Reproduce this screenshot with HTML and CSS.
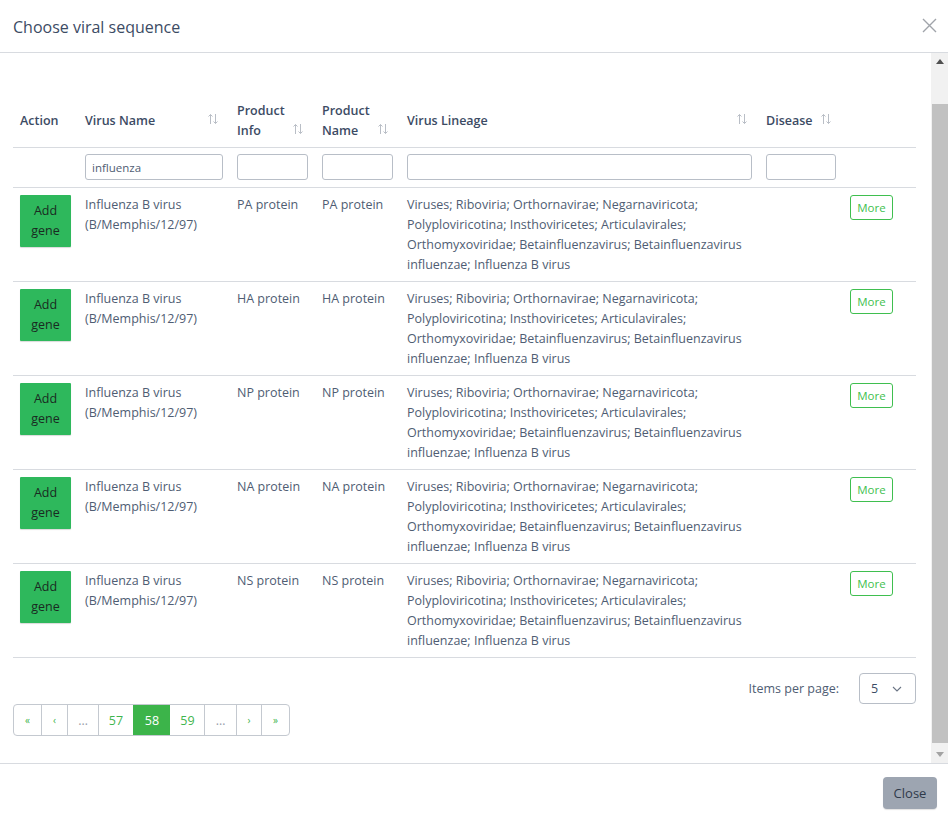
FILE: index.html
```html
<!DOCTYPE html>
<html>
<head>
<meta charset="utf-8">
<link rel="stylesheet" href="styles.css">
</head>
<body>
<div class="modal">
  <div class="modal-header">
    <h5 class="modal-title">Choose viral sequence</h5>
    <button class="btn-x" aria-label="Close"><svg width="15" height="15" viewBox="0 0 15 15"><path d="M1 1L14 14M14 1L1 14" stroke="#a0a4aa" stroke-width="1.4" fill="none"/></svg></button>
  </div>
  <div class="modal-body-wrap">
    <div class="modal-body">
      <table class="vtable">
        <colgroup>
          <col class="c-action"><col class="c-name"><col class="c-info"><col class="c-pname"><col class="c-lin"><col class="c-dis"><col class="c-more">
        </colgroup>
        <thead>
          <tr class="head-row">
            <th><div class="th-in"><span>Action</span></div></th>
            <th><div class="th-in"><span>Virus Name</span><svg class="sort" viewBox="0 0 12 12"><path d="M3.5 11V1.5M1.5 3.5L3.5 1.5L5.5 3.5M8.5 1V10.5M6.5 8.5L8.5 10.5L10.5 8.5" stroke="#b9bec6" stroke-width="1" fill="none"/></svg></div></th>
            <th><div class="th-in"><span>Product<br>Info</span><svg class="sort" viewBox="0 0 12 12"><path d="M3.5 11V1.5M1.5 3.5L3.5 1.5L5.5 3.5M8.5 1V10.5M6.5 8.5L8.5 10.5L10.5 8.5" stroke="#b9bec6" stroke-width="1" fill="none"/></svg></div></th>
            <th><div class="th-in"><span>Product<br>Name</span><svg class="sort" viewBox="0 0 12 12"><path d="M3.5 11V1.5M1.5 3.5L3.5 1.5L5.5 3.5M8.5 1V10.5M6.5 8.5L8.5 10.5L10.5 8.5" stroke="#b9bec6" stroke-width="1" fill="none"/></svg></div></th>
            <th><div class="th-in"><span>Virus Lineage</span><svg class="sort" viewBox="0 0 12 12"><path d="M3.5 11V1.5M1.5 3.5L3.5 1.5L5.5 3.5M8.5 1V10.5M6.5 8.5L8.5 10.5L10.5 8.5" stroke="#b9bec6" stroke-width="1" fill="none"/></svg></div></th>
            <th><div class="th-in"><span>Disease</span><svg class="sort" viewBox="0 0 12 12"><path d="M3.5 11V1.5M1.5 3.5L3.5 1.5L5.5 3.5M8.5 1V10.5M6.5 8.5L8.5 10.5L10.5 8.5" stroke="#b9bec6" stroke-width="1" fill="none"/></svg></div></th>
            <th></th>
          </tr>
          <tr class="filter-row">
            <td></td>
            <td><input class="finput" value="influenza"></td>
            <td><input class="finput"></td>
            <td><input class="finput"></td>
            <td><input class="finput"></td>
            <td><input class="finput"></td>
            <td></td>
          </tr>
        </thead>
        <tbody>
          <tr>
            <td><button class="btn-add">Add<br>gene</button></td>
            <td>Influenza B virus<br>(B/Memphis/12/97)</td>
            <td>PA protein</td>
            <td>PA protein</td>
            <td>Viruses; Riboviria; Orthornavirae; Negarnaviricota; Polyploviricotina; Insthoviricetes; Articulavirales; Orthomyxoviridae; Betainfluenzavirus; Betainfluenzavirus influenzae; Influenza B virus</td>
            <td></td>
            <td><button class="btn-more">More</button></td>
          </tr>
          <tr>
            <td><button class="btn-add">Add<br>gene</button></td>
            <td>Influenza B virus<br>(B/Memphis/12/97)</td>
            <td>HA protein</td>
            <td>HA protein</td>
            <td>Viruses; Riboviria; Orthornavirae; Negarnaviricota; Polyploviricotina; Insthoviricetes; Articulavirales; Orthomyxoviridae; Betainfluenzavirus; Betainfluenzavirus influenzae; Influenza B virus</td>
            <td></td>
            <td><button class="btn-more">More</button></td>
          </tr>
          <tr>
            <td><button class="btn-add">Add<br>gene</button></td>
            <td>Influenza B virus<br>(B/Memphis/12/97)</td>
            <td>NP protein</td>
            <td>NP protein</td>
            <td>Viruses; Riboviria; Orthornavirae; Negarnaviricota; Polyploviricotina; Insthoviricetes; Articulavirales; Orthomyxoviridae; Betainfluenzavirus; Betainfluenzavirus influenzae; Influenza B virus</td>
            <td></td>
            <td><button class="btn-more">More</button></td>
          </tr>
          <tr>
            <td><button class="btn-add">Add<br>gene</button></td>
            <td>Influenza B virus<br>(B/Memphis/12/97)</td>
            <td>NA protein</td>
            <td>NA protein</td>
            <td>Viruses; Riboviria; Orthornavirae; Negarnaviricota; Polyploviricotina; Insthoviricetes; Articulavirales; Orthomyxoviridae; Betainfluenzavirus; Betainfluenzavirus influenzae; Influenza B virus</td>
            <td></td>
            <td><button class="btn-more">More</button></td>
          </tr>
          <tr>
            <td><button class="btn-add">Add<br>gene</button></td>
            <td>Influenza B virus<br>(B/Memphis/12/97)</td>
            <td>NS protein</td>
            <td>NS protein</td>
            <td>Viruses; Riboviria; Orthornavirae; Negarnaviricota; Polyploviricotina; Insthoviricetes; Articulavirales; Orthomyxoviridae; Betainfluenzavirus; Betainfluenzavirus influenzae; Influenza B virus</td>
            <td></td>
            <td><button class="btn-more">More</button></td>
          </tr>
        </tbody>
      </table>
      <div class="per-page">
        <span class="pp-label">Items per page:</span>
        <div class="pp-select"><span>5</span><svg width="10" height="6" viewBox="0 0 10 6"><path d="M1 1L5 5L9 1" stroke="#6b7585" stroke-width="1.1" fill="none"/></svg></div>
      </div>
      <ul class="pager">
        <li class="pg sm w-first">«</li>
        <li class="pg sm w-prev">‹</li>
        <li class="pg dots w-dots1">…</li>
        <li class="pg w-57">57</li>
        <li class="pg active w-58">58</li>
        <li class="pg w-59">59</li>
        <li class="pg dots w-dots2">…</li>
        <li class="pg sm w-next">›</li>
        <li class="pg sm w-last">»</li>
      </ul>
    </div>
    <div class="vscroll">
      <div class="sb-btn"><svg width="8" height="5" viewBox="0 0 8 5"><path d="M0 5L4 0L8 5Z" fill="#505050"/></svg></div>
      <div class="sb-track"><div class="sb-thumb"></div></div>
      <div class="sb-btn"><svg width="8" height="5" viewBox="0 0 8 5"><path d="M0 0L4 5L8 0Z" fill="#a3a3a3"/></svg></div>
    </div>
  </div>
  <div class="modal-footer">
    <button class="btn-close">Close</button>
  </div>
</div>
</body>
</html>
```

FILE: styles.css
```css
* { box-sizing: border-box; }
html, body { margin: 0; padding: 0; background: #fff; }
body {
  font-family: "Open Sans", "Noto Sans", sans-serif;
  font-size: 12.5px;
  color: #4f5d73;
  width: 948px;
  height: 820px;
  overflow: hidden;
}
.modal {
  width: 948px;
  height: 820px;
  display: flex;
  flex-direction: column;
  background: #fff;
}
.modal-header {
  height: 53px;
  border-bottom: 1px solid #d8dbe0;
  display: flex;
  align-items: center;
  justify-content: space-between;
  padding: 0 11px 0 13px;
  flex: none;
}
.modal-title {
  margin: 0;
  font-size: 16px;
  font-weight: 400;
  color: #3c4b64;
  padding-top: 1px;
}
.btn-x {
  border: 0;
  background: none;
  padding: 0;
  width: 15px;
  height: 15px;
  display: flex;
  margin-bottom: 1px;
}
.modal-body-wrap {
  height: 711px;
  display: flex;
  border-bottom: 1px solid #d8dbe0;
  flex: none;
}
.modal-body {
  flex: 1;
  padding: 40px 15px 0 13px;
  min-width: 0;
}
.vscroll {
  width: 17px;
  flex: none;
  background: #f1f1f1;
  display: flex;
  flex-direction: column;
}
.sb-btn {
  height: 17px;
  display: flex;
  align-items: center;
  justify-content: center;
}
.sb-track {
  flex: 1;
  padding: 34px 0 3px 0;
  display: flex;
}
.sb-thumb {
  flex: 1;
  background: #c1c1c1;
  margin-left: 1px;
}
.vtable {
  width: 903px;
  border-collapse: collapse;
  table-layout: fixed;
}
.c-action { width: 65px; }
.c-name { width: 152px; }
.c-info { width: 85px; }
.c-pname { width: 85px; }
.c-lin { width: 359px; }
.c-dis { width: 84px; }
.c-more { width: 73px; }
.vtable th, .vtable td {
  padding: 7px 7px 6px 7px;
  line-height: 20px;
  vertical-align: top;
  text-align: left;
}
.vtable th {
  font-weight: 600;
  color: #3c4b64;
  font-size: 12.5px;
  height: 54px;
  vertical-align: middle;
  border-bottom: 1px solid #d8dbe0;
  padding: 7px 11px 6px 7px;
}
.th-in {
  display: flex;
  justify-content: space-between;
  align-items: flex-end;
  padding-top: 1px;
}
.sort {
  width: 12px;
  height: 12px;
  margin-bottom: 6px;
  flex: none;
}
.filter-row td {
  padding: 6px 7px 7px 7px;
  height: 40px;
  border-bottom: 1px solid #d8dbe0;
  vertical-align: middle;
}
.finput {
  width: 100%;
  height: 26px;
  border: 1px solid #b8bec7;
  border-radius: 3px;
  font-family: inherit;
  font-size: 11.5px;
  color: #4f5d73;
  padding: 0 6px;
  display: block;
}
.vtable tbody td {
  border-bottom: 1px solid #d8dbe0;
}
.btn-add {
  width: 51px;
  height: 52px;
  border: 0;
  border-radius: 1px;
  background: #2eb85c;
  color: #1a2a22;
  font-family: inherit;
  font-size: 12.5px;
  line-height: 20px;
  padding: 0;
  display: block;
  box-shadow: 0 1px 1px rgba(0,0,0,0.15);
}
.btn-more {
  width: 43px;
  height: 25px;
  border: 1px solid #3fbf4f;
  border-radius: 3px;
  background: #fff;
  color: #3fbf4f;
  font-family: inherit;
  font-size: 11.5px;
  padding: 0;
  display: block;
}
.per-page {
  display: flex;
  justify-content: flex-end;
  align-items: center;
  margin-top: 15px;
  height: 31px;
}
.pp-label {
  font-size: 12.5px;
  color: #4f5d73;
  margin-right: 20px;
}
.pp-select {
  width: 57px;
  height: 31px;
  border: 1px solid #b8bec7;
  border-radius: 4px;
  display: flex;
  align-items: center;
  justify-content: space-between;
  padding: 0 13px 0 11px;
  color: #3c4b64;
  font-size: 12.5px;
}
.pager {
  list-style: none;
  margin: 0;
  padding: 0;
  display: inline-flex;
  border: 1px solid #c4c9d0;
  border-radius: 4px;
  overflow: hidden;
  height: 32px;
}
.pg {
  height: 30px;
  display: flex;
  align-items: center;
  justify-content: center;
  color: #3fb54e;
  font-size: 12.5px;
  border-left: 1px solid #c4c9d0;
  padding: 0;
}
.pg:first-child { border-left: 0; }
.pg.sm { font-size: 10px; }
.pg.dots { color: #9aa0ab; }
.w-first { width: 27px; }
.w-prev { width: 26px; }
.w-dots1 { width: 31px; }
.w-57 { width: 35px; }
.w-58 { width: 37px; }
.w-59 { width: 34px; }
.w-dots2 { width: 32px; }
.w-next { width: 25px; }
.w-last { width: 28px; }
.pg.active {
  background: #3cb44a;
  color: #fff;
  border-left-color: #3cb44a;
}
.pg.active + .pg { border-left-color: transparent; }
.modal-footer {
  flex: 1;
  display: flex;
  justify-content: flex-end;
  align-items: flex-start;
  padding: 13px 11px 0 0;
}
.btn-close {
  width: 54px;
  height: 32px;
  border: 0;
  border-radius: 4px;
  background: #9da5b1;
  color: #2f3a4a;
  font-family: inherit;
  font-size: 13px;
  padding: 0;
  box-shadow: 0 1px 1px rgba(0,0,0,0.12);
}
```
